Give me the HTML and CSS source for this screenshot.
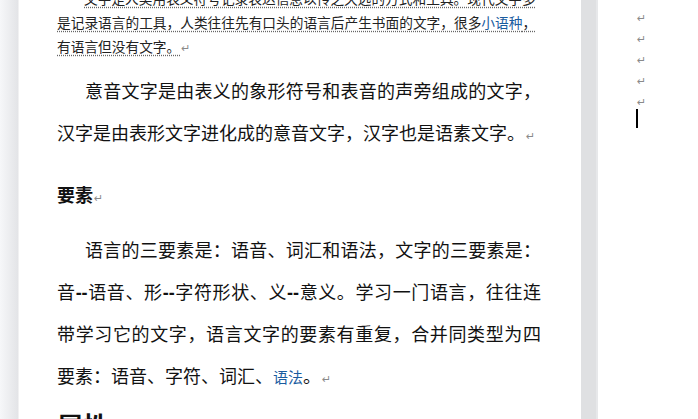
FILE: index.html
```html
<!DOCTYPE html>
<html>
<head>
<meta charset="utf-8">
<link rel="stylesheet" href="styles.css">
</head>
<body>

<div class="gutter"></div>

<div class="page">
  <div class="doc">
    <p class="intro"><span class="mark">文字是人类用表义符号记录表达信息以传之久远的方式和工具。现代文字多<br>是记录语言的工具，人类往往先有口头的语言后产生书面的文字，很多<a class="link">小语种</a>，<br>有语言但没有文字。</span><span class="pm">↵</span></p>

    <p class="para">意音文字是由表义的象形符号和表音的声旁组成的文字，汉字是由表形文字进化成的意音文字，汉字也是语素文字。<span class="pm">↵</span></p>

    <h3 class="sec">要素<span class="pm">↵</span></h3>

    <p class="para para-2">语言的三要素是：语音、词汇和语法，文字的三要素是：音<span class="dash">--</span>语音、形<span class="dash">--</span>字符形状、义<span class="dash">--</span>意义。学习一门语言，往往连带学习它的文字，语言文字的要素有重复，合并同类型为四要素：语音、字符、词汇、<a class="link link-sm">语法</a>。<span class="pm">↵</span></p>

    <h2 class="sec-big">属性</h2>
  </div>
</div>

<div class="bar"></div>

<div class="side">
  <div class="pm-line"><span class="pm">↵</span></div>
  <div class="pm-line"><span class="pm">↵</span></div>
  <div class="pm-line"><span class="pm">↵</span></div>
  <div class="pm-line"><span class="pm">↵</span></div>
  <div class="pm-line"><span class="pm">↵</span></div>
  <div class="cursor"></div>
</div>

</body>
</html>
```

FILE: styles.css
```css
* {
  box-sizing: border-box;
}

html, body {
  margin: 0;
  height: 419px;
  overflow: hidden;
  background-color: #fff;
}

body {
  display: flex;
  font-family: "Noto Sans CJK SC", sans-serif;
  color: #111;
}

.gutter {
  flex: none;
  width: 19px;
  background: linear-gradient(to right, #f6f7f9, #e3e4e7);
  border-right: 1px solid #f1f1f2;
}

.page {
  flex: none;
  width: 562px;
  padding-left: 38px;
  overflow: hidden;
}

.doc {
  width: 484px;
  margin-top: -14px;
}

/* top paragraph, mostly scrolled away */
.intro {
  margin: 0;
  font-size: 13.7px;
  line-height: 24px;
  text-indent: 27px;
  white-space: nowrap;
  color: #222;
}

.intro .mark {
  text-decoration: underline dotted #666;
  text-underline-offset: 3px;
}

.para {
  margin: 11px 0 0;
  font-size: 18px;
  line-height: 42px;
  text-indent: 28px;
  text-align: justify;
}

.para-2 {
  margin-top: 13px;
}

.sec {
  margin: 20px 0 0;
  font-size: 18px;
  line-height: 42px;
  font-weight: bold;
}

.sec-big {
  margin: 8px 0 0;
  font-size: 26px;
  line-height: 42px;
  font-weight: bold;
}

.dash {
  font-family: "Liberation Sans", sans-serif;
  font-weight: bold;
  line-height: 0;
}

.link {
  color: #1a5c9f;
}

.link-sm {
  font-size: 15px;
  line-height: 0;
}

.pm {
  font-family: "DejaVu Sans", sans-serif;
  font-size: 11px;
  line-height: 0;
  font-weight: normal;
  color: #8a8a8a;
  margin-left: 1px;
  text-decoration: none;
}

.bar {
  flex: none;
  width: 17px;
  background-color: #dfe0e2;
  border-right: 2px solid #e7e8ea;
}

.side {
  flex: 1;
  padding: 5px 0 0 38px;
}

.pm-line {
  height: 21px;
  line-height: 21px;
}

.cursor {
  width: 2px;
  height: 19px;
  margin-top: -1px;
  background-color: #000;
}
```
